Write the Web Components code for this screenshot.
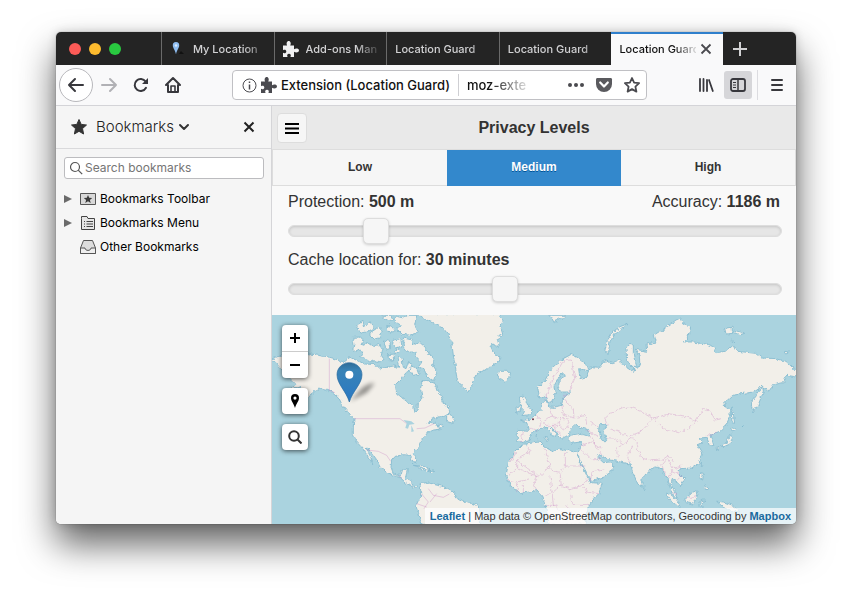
<!DOCTYPE html>
<html lang="en">
<head>
<meta charset="utf-8">
<title>Location Guard</title>
<style>
  html, body { margin: 0; }
  body {
    box-sizing: border-box; min-height: 100vh; padding: 32px 56px 80px;
    display: flex; background: #fff; overflow: hidden;
    font: 12px/16px Inter, "Noto Sans", sans-serif; color: #1a1a1a;
  }
</style>
</head>
<body>
<browser-window>
  <tab-strip slot="tabs">
    <browser-tab>
      <svg slot="icon" width="16" height="16" viewBox="0 0 16 16" aria-hidden="true"><path d="M9 13h5l-3-3z" fill="#111"/><path d="M6 1a3.400 3.400 0 0 0-3.200 3.600C2.800 7 5.200 9 6 13.500 6.800 9 9.200 7 9.200 4.600A3.400 3.400 0 0 0 6 1z" fill="#8fbdf0"/><circle cx="6" cy="4.500" r="1.200" fill="#dcecff"/></svg>
      My Location
    </browser-tab>
    <browser-tab>
      <svg slot="icon" width="16" height="16" viewBox="0 0 16 16" fill="#f0f0f1" aria-hidden="true"><path d="M0 4.500h4.200C3 2.500 3.800 0 5.700 0s2.700 2.500 1.500 4.500H11v3.700c1.800-1.200 5-.8 5 1.300s-3.200 2.500-5 1.300V16H7.400c1-1.700.2-3.300-1.400-3.300S3.600 14.300 4.600 16H0v-4.200c1.600.9 3.300.2 3.300-1.400S1.600 8.200 0 9.200z"/></svg>
      Add-ons Man
    </browser-tab>
    <browser-tab>Location Guard</browser-tab>
    <browser-tab>Location Guard</browser-tab>
    <browser-tab active>Location Guard</browser-tab>
  </tab-strip>
  <nav-toolbar slot="toolbar"></nav-toolbar>
  <bookmarks-sidebar slot="sidebar">
    <bookmark-row folder>
      <svg slot="icon" width="16" height="16" viewBox="0 0 16 16" aria-hidden="true"><path d="M.5 2.500h15v11H.5z" fill="#d8d8d8" stroke="#555"/><path d="m8 4 1.200 2.800 3 .2-2.300 2 .8 3L8 10.300 5.300 12l.8-3-2.300-2 3-.2z" fill="#3a3a3a"/></svg>
      Bookmarks Toolbar
    </bookmark-row>
    <bookmark-row folder>
      <svg slot="icon" width="16" height="16" viewBox="0 0 16 16" aria-hidden="true"><path d="M1.500 3.500v11h13v-11H8l-1-2H1.500z" fill="#e6e6e6" stroke="#444"/><path d="M4 6.500h1m1.500 0H13M4 9h1m1.500 0H13M4 11.500h1m1.500 0H13" stroke="#444"/></svg>
      Bookmarks Menu
    </bookmark-row>
    <bookmark-row>
      <svg slot="icon" width="16" height="16" viewBox="0 0 16 16" fill="#ddd" stroke="#555" aria-hidden="true"><path d="M3.500 1.500h9l3 7.500v5.500H.5V9z"/><path d="M.5 9H5c0 3.200 6 3.200 6 0h4.500v5.500H.5z" fill="#eee"/></svg>
      Other Bookmarks
    </bookmark-row>
  </bookmarks-sidebar>
  <privacy-page>
    <level-tabs slot="levels"></level-tabs>
    <level-slider slot="settings" value="158" note="Accuracy:" note-value="1186 m">Protection: <b>500 m</b></level-slider>
    <level-slider slot="settings" value="436">Cache location for: <b>30 minutes</b></level-slider>
    <map-view slot="map"></map-view>
  </privacy-page>
</browser-window>

<script>
const base = `
  :host, *, *::before, *::after { box-sizing: border-box; }
  button { font: inherit; color: inherit; border: 0; padding: 0; margin: 0; background: none; display: flex; align-items: center; justify-content: center; }
  svg { display: block; flex: none; }
`;
function define(name, css, html) {
  customElements.define(name, class extends HTMLElement {
    constructor() {
      super();
      const body = typeof html === 'function' ? html(this) : html;
      this.attachShadow({ mode: 'open' }).innerHTML = `<style>${base}${css}</style>${body}`;
    }
  });
}

define('browser-window', `
  :host { flex: 1; display: flex; flex-direction: column; min-width: 0; border-radius: 5px;
    box-shadow: 0 0 1px rgba(0,0,0,.6), 0 0 10px rgba(0,0,0,.16), 0 20px 36px rgba(0,0,0,.62); }
  .frame { flex: 1; display: flex; flex-direction: column; border-radius: 5px; overflow: hidden; background: #f5f5f5; }
  .body { flex: 1; display: flex; min-height: 0; }
`, `<div class="frame"><slot name="tabs"></slot><slot name="toolbar"></slot>
  <div class="body"><slot name="sidebar"></slot><slot></slot></div></div>`);

define('tab-strip', `
  :host { display: flex; height: 33px; background: #242424; color: #d2d2d4; }
  .lights { width: 105px; display: flex; gap: 8px; align-items: center; padding-left: 13px; }
  .lights button { width: 12px; height: 12px; border-radius: 50%; }
  .tabs { flex: 1; display: flex; min-width: 0; }
  .new { width: 73px; justify-content: flex-start; padding-left: 9px; }
`, `<div class="lights">
    <button aria-label="Close window" style="background:#fc5b57"></button>
    <button aria-label="Minimize window" style="background:#fdbb2e"></button>
    <button aria-label="Zoom window" style="background:#29c940"></button>
  </div>
  <div class="tabs" role="tablist"><slot></slot></div>
  <button class="new" aria-label="New tab"><svg width="16" height="16" viewBox="0 0 16 16" stroke="#d2d2d4" stroke-width="2"><path d="M8 1v14M1 8h14"/></svg></button>`);

define('browser-tab', `
  :host { flex: 1 1 0; min-width: 0; display: flex; border-left: 1px solid #6a6a6a; }
  :host([active]) { background: #f9f9fa; color: #111; border-left: 0; border-top: 2px solid #2f7fcc; padding-bottom: 2px; }
  .tab { flex: 1; min-width: 0; justify-content: flex-start; padding: 0 8px; gap: 7px; font-size: 11px; font-weight: 500; }
  .label { flex: 1; text-align: left; white-space: nowrap; overflow: hidden;
    -webkit-mask-image: linear-gradient(90deg, #000 calc(100% - 22px), transparent calc(100% + 4px)); }
  :host([active]) .tab { padding-right: 0; }
  .close { width: 20px; margin-right: 7px; }
`, el => `<button class="tab" role="tab" aria-selected="${el.hasAttribute('active')}"><slot name="icon"></slot><span class="label"><slot></slot></span></button>
  ${el.hasAttribute('active') ? '<button class="close" aria-label="Close tab"><svg width="12" height="12" viewBox="0 0 12 12" stroke="#4a4a4f" stroke-width="1.800"><path d="m1.500 1.500 9 9m0-9-9 9"/></svg></button>' : ''}`);

define('nav-toolbar', `
  :host { display: flex; align-items: center; height: 41px; padding: 0 3px; background: #f9f9fa; border-bottom: 1px solid #d4d4d8; color: #38383d; }
  .tool { width: 32px; height: 28px; }
  .back { width: 34px; height: 34px; border: 1px solid #b8b8bc; border-radius: 50%; background: #fff; }
  .url { flex: 1; min-width: 0; height: 30px; margin: 0 43px; display: flex; align-items: center; gap: 4px; padding: 0 5px 0 9px;
    border: 1px solid #c0c0c4; border-radius: 4px; background: #fff; }
  .identity { gap: 4px; font-size: 13px; font-weight: 500; color: #111; white-space: nowrap; }
  .url i { width: 1px; height: 22px; background: #cfcfd3; margin: 0 4px; }
  input { flex: 1; min-width: 0; width: 40px; border: 0; padding: 0; background: none; outline: 0; font: inherit; font-size: 13px; font-weight: 500; color: #111;
    -webkit-mask-image: linear-gradient(90deg, #000 22px, transparent 66px); }
  .actions { display: flex; gap: 10px; }
  .on { width: 28px; border-radius: 3px; background: #d6d6d9; margin: 0 5px 0 2px; }
  .sep { width: 1px; height: 30px; background: #dcdce0; margin-right: 3px; }
`, `<button class="back" aria-label="Back"><svg width="18" height="16" viewBox="0 0 18 16" fill="none" stroke="currentColor" stroke-width="2" stroke-linecap="round" stroke-linejoin="round"><path d="M16 8H2m6-6L2 8l6 6"/></svg></button>
  <button class="tool" aria-label="Forward"><svg width="18" height="16" viewBox="0 0 18 16" fill="none" stroke="#b1b1b5" stroke-width="2" stroke-linecap="round" stroke-linejoin="round"><path d="M2 8h14m-6-6 6 6-6 6"/></svg></button>
  <button class="tool" aria-label="Reload"><svg width="16" height="16" viewBox="0 0 16 16" fill="none" stroke="currentColor" stroke-width="2" stroke-linecap="round"><path d="M13 10.800A6 6 0 1 1 12.600 4.500"/><path d="M15 1v6H9z" fill="currentColor" stroke="none"/></svg></button>
  <button class="tool" aria-label="Home"><svg width="18" height="18" viewBox="0 0 18 18" fill="none" stroke="currentColor" stroke-width="2" stroke-linecap="round" stroke-linejoin="round"><path d="m2 9 7-7 7 7M4 9v7h10V9"/><path d="M7 15v-5h4v5" stroke-width="1.600"/></svg></button>
  <div class="url">
    <button class="identity"><svg width="15" height="15" viewBox="0 0 15 15" fill="none" stroke="#4a4a4f"><circle cx="7.500" cy="7.500" r="6.500"/><path d="M7.500 6.500v5M7.500 3.500v1.500" stroke-width="1.500"/></svg>
      <svg width="16" height="16" viewBox="0 0 16 16" fill="#4a4a4f"><path d="M0 4.500h4.200C3 2.500 3.800 0 5.700 0s2.700 2.500 1.500 4.500H11v3.700c1.800-1.200 5-.8 5 1.300s-3.200 2.500-5 1.300V16H7.400c1-1.700.2-3.300-1.400-3.300S3.600 14.300 4.600 16H0v-4.200c1.600.9 3.300.2 3.300-1.400S1.600 8.200 0 9.200z"/></svg>
      <span>Extension (Location Guard)</span></button>
    <i></i>
    <input aria-label="Address" value="moz-exte">
    <div class="actions">
      <button aria-label="Page actions"><svg width="18" height="16" viewBox="0 0 18 16" fill="#4a4a4f"><circle cx="3" cy="8" r="2"/><circle cx="9" cy="8" r="2"/><circle cx="15" cy="8" r="2"/></svg></button>
      <button aria-label="Save to Pocket"><svg width="18" height="16" viewBox="0 0 18 16"><path d="M2.500 1h13C16.500 1 17 1.600 17 2.500V7a8 8 0 0 1-16 0V2.500C1 1.600 1.500 1 2.500 1z" fill="#5a5a5e"/><path d="m5.200 5.500 3.800 4 3.800-4" fill="none" stroke="#fff" stroke-width="2.200" stroke-linecap="round" stroke-linejoin="round"/></svg></button>
      <button aria-label="Bookmark this page"><svg width="18" height="18" viewBox="0 0 18 18" fill="none" stroke="#4a4a4f" stroke-width="1.800" stroke-linejoin="round"><path d="m9 2 2.100 4.600 5 .6-3.700 3.400 1 5L9 13.100l-4.400 2.500 1-5L1.900 7.200l5-.6z"/></svg></button>
    </div>
  </div>
  <button class="tool" aria-label="Library"><svg width="16" height="16" viewBox="0 0 16 16" stroke="currentColor" stroke-width="1.800" stroke-linecap="round"><path d="M2 2v12M5.500 2v12M9 3v11M11 3l3.800 11"/></svg></button>
  <button class="tool on" aria-label="Sidebars" aria-pressed="true"><svg width="16" height="14" viewBox="0 0 16 14" fill="none" stroke="currentColor" stroke-width="1.800"><rect x="1" y="1" width="14" height="12" rx="2"/><path d="M8 1v12" stroke-width="1.500"/><path d="M3 4.500h3M3 7h3M3 9.500h3" stroke-width="1"/></svg></button>
  <span class="sep"></span>
  <button class="tool" aria-label="Open menu"><svg width="14" height="14" viewBox="0 0 14 14" stroke="currentColor" stroke-width="2" stroke-linecap="round"><path d="M2 2h10M2 7h10M2 12h10"/></svg></button>`);

define('bookmarks-sidebar', `
  :host { display: block; width: 216px; flex: none; background: #f5f5f5; border-right: 1px solid #d5d5d8; }
  header { display: flex; align-items: center; height: 43px; padding: 0 14px; border-bottom: 1px solid #d9d9db; }
  .title { gap: 8px; font-size: 15px; font-weight: 300; color: #222; }
  .title svg:last-child { margin-left: -4px; }
  .x { margin-left: auto; width: 16px; height: 20px; }
  .search { display: flex; align-items: center; gap: 2px; height: 22px; margin: 8px 7px 8px 8px; padding: 0 4px; border: 1px solid #bcbcbf; border-radius: 3px; background: #fff; }
  input { flex: 1; min-width: 0; border: 0; padding: 0; outline: 0; font: inherit; background: none; }
  input::placeholder { color: #757575; opacity: 1; }
`, `<header><button class="title"><svg width="18" height="18" viewBox="0 0 18 18" fill="#333" stroke="#333" stroke-linejoin="round"><path d="m9 1.500 2.200 4.900 5.300.6-4 3.600 1.100 5.400L9 13.300 4.400 16l1.100-5.400-4-3.600 5.300-.6z"/></svg>Bookmarks
    <svg width="12" height="12" viewBox="0 0 12 12" fill="none" stroke="#333" stroke-width="2" stroke-linecap="round" stroke-linejoin="round"><path d="m2 4 4 4 4-4"/></svg></button>
    <button class="x" aria-label="Close sidebar"><svg width="12" height="12" viewBox="0 0 12 12" stroke="#222" stroke-width="2"><path d="m1.500 1.500 9 9m0-9-9 9"/></svg></button></header>
  <div class="search"><svg width="14" height="14" viewBox="0 0 14 14" fill="none" stroke="#555" stroke-width="1.200"><circle cx="6" cy="6" r="4.500"/><path d="m9.200 9.200 4 4"/></svg><input type="text" aria-label="Search bookmarks" placeholder="Search bookmarks"></div>
  <div role="tree"><slot></slot></div>`);

define('bookmark-row', `
  :host { display: flex; align-items: center; height: 24px; padding-left: 8px; gap: 4px; color: #000; }
  .twisty { width: 8px; margin-right: 4px; }
`, el => `<span class="twisty">${el.hasAttribute('folder') ? '<svg width="8" height="10" viewBox="0 0 8 10" fill="#6a6a6a"><path d="m0 1 8 4-8 4z"/></svg>' : ''}</span>
  <slot name="icon"></slot><span role="treeitem"><slot></slot></span>`);

define('privacy-page', `
  :host { flex: 1; min-width: 0; display: flex; flex-direction: column; background: #f9f9f9; color: #333; font-family: "Liberation Sans", Arial, sans-serif; }
  .bar { display: grid; grid-template-columns: 30px 1fr 30px; align-items: center; height: 44px; padding: 0 5px; background: #e9e9e9; border-bottom: 1px solid #ddd; }
  .menu { width: 30px; height: 30px; border: 1px solid #ddd; border-radius: 4px; background: #f6f6f6; }
  h1 { margin: 0; text-align: center; font-size: 16px; line-height: 20px; }
  .settings { padding: 0 14px 13px 16px; }
`, `<div class="bar"><button class="menu" aria-label="Menu"><svg width="14" height="12" viewBox="0 0 14 12" stroke="#000" stroke-width="2"><path d="M0 2h14M0 6.500h14M0 11h14"/></svg></button><h1>Privacy Levels</h1></div>
  <slot name="levels"></slot><div class="settings"><slot name="settings"></slot></div><slot name="map"></slot>`);

define('level-tabs', `
  :host { display: flex; height: 36px; background: #f6f6f6; border: 1px solid #ddd; border-width: 0 1px 1px; }
  button { flex: 1; font-size: 12px; font-weight: 700; padding-bottom: 2px; }
  button[aria-pressed=true] { background: #3388cc; color: #fff; margin-bottom: -1px; text-shadow: 0 1px 0 #005599; padding-bottom: 3px; }
`, `<button aria-pressed="false">Low</button><button aria-pressed="true">Medium</button><button aria-pressed="false">High</button>`);

define('level-slider', `
  :host { display: block; font-size: 16px; }
  .row { display: flex; justify-content: space-between; line-height: 32px; padding-right: 2px; }
  input { appearance: none; -webkit-appearance: none; display: block; width: 100%; height: 26px; margin: 0; background: none; }
  input::-webkit-slider-runnable-track { height: 12px; border: 1px solid #ddd; border-radius: 6px; background: #e6e6e6; box-shadow: inset 0 1px 3px rgba(0,0,0,.15); }
  input::-webkit-slider-thumb { -webkit-appearance: none; width: 26px; height: 26px; margin-top: -8px; border: 1px solid #ddd; border-radius: 5px; background: #f6f6f6; box-shadow: 0 1px 3px rgba(0,0,0,.18); }
`, el => `<div class="row"><label for="range"><slot></slot></label>${el.hasAttribute('note') ? `<span>${el.getAttribute('note')} <b>${el.getAttribute('note-value')}</b></span>` : ''}</div>
  <input id="range" type="range" min="0" max="1000" value="${el.getAttribute('value')}">`);

define('map-view', `
  :host { flex: 1; display: flex; position: relative; min-height: 120px; background: #aad3df; overflow: hidden; }
  .map { position: absolute; inset: 0; width: 100%; height: 100%; }
  .controls { position: relative; display: flex; flex-direction: column; gap: 10px; padding: 10px; }
  .group { width: 26px; border-radius: 4px; background: #fff; box-shadow: 0 1px 5px rgba(0,0,0,.65); color: #000; }
  .group button { width: 26px; height: 26px; font-weight: 700; }
  .group button + button { border-top: 1px solid #ccc; height: 27px; }
  .credit { position: absolute; right: 0; bottom: 0; padding: 0 5px; background: rgba(255,255,255,.7); font-size: 11px; line-height: 16px; white-space: nowrap; }
  a { color: #1a6a9e; font-weight: 700; text-decoration: none; }
`, `<svg class="map" viewBox="6 9 1572 627" preserveAspectRatio="xMinYMin slice" role="img" aria-label="World map">
  <defs>
    <filter id="coast" x="-2%" y="-2%" width="104%" height="104%"><feTurbulence type="fractalNoise" baseFrequency=".08" numOctaves="3" seed="4"/><feDisplacementMap in="SourceGraphic" scale="14" xChannelSelector="R" yChannelSelector="G"/></filter>
    <linearGradient id="pin" x1="0" x2="0" y1="0" y2="1"><stop stop-color="#2e6c97"/><stop offset=".2" stop-color="#3883b7"/><stop offset="1" stop-color="#2a78c4"/></linearGradient>
    <filter id="soft" x="-50%" y="-50%" width="200%" height="200%"><feGaussianBlur stdDeviation="6"/></filter>
  </defs>
  <g filter="url(#coast)" fill="#f2efe9" stroke="#82b9cf" stroke-width="2.500" stroke-linejoin="round">
    <path d="M0 143 16 150 30 168 34 176 50 190 76 215 60 232 90 225 100 240 85 268 115 258 132 237 150 228 170 232 188 240 205 255 215 275 228 293 240 310 252 322 250 345 250 368 262 392 280 412 298 440 308 455 302 435 288 408 300 415 320 443 330 465 345 478 370 490 392 498 405 510 422 522 438 528 440 522 426 518 425 505 406 500 409 486 412 470 398 472 394 486 382 491 370 484 363 466 365 445 376 433 400 428 420 430 430 450 438 452 436 436 430 424 445 405 452 388 464 374 474 360 488 354 505 352 514 343 498 338 486 328 474 335 484 322 505 315 535 311 541 292 520 272 512 248 502 236 494 214 474 206 456 206 452 228 456 258 442 275 441 300 432 300 428 282 402 262 380 244 376 218 398 196 408 182 430 168 416 148 408 170 400 166 396 140 388 130 382 142 386 166 370 162 330 170 318 158 285 156 262 146 240 136 220 152 200 142 180 136 150 131 115 125 80 118 45 125Z"/>
    <path d="M248 76 272 75 282 88 276 98 292 92 310 104 326 98 338 112 334 130 342 142 330 150 314 146 302 152 286 140 270 132 282 122 262 114 248 118 252 98ZM260 45 278 24 284 46 300 28 310 50 290 60 270 64ZM300 62 326 44 340 56 326 66 332 76 310 82 300 72ZM334 10 366 10 372 22 356 26 340 18ZM350 40 364 42 376 58 354 62ZM376 12 400 18 414 10 440 10 434 40 446 62 420 70 396 66 380 50 394 40 376 30ZM340 84 360 88 362 110 348 114ZM370 84 392 80 396 104 378 112 368 98ZM352 128 372 126 374 146 358 146ZM400 78 426 84 432 98 450 92 466 106 470 120 486 130 494 154 486 160 500 182 490 206 470 192 462 170 444 166 456 150 440 136 434 118 416 122 404 106ZM424 162 444 170 450 186 430 190 420 178ZM380 108 390 118 374 126Z"/>
    <path d="M440 5 460 20 500 36 516 44 532 64 545 90 550 130 556 160 560 196 574 222 592 237 602 232 608 210 622 184 650 172 682 154 690 134 668 122 662 96 688 104 682 82 698 66 690 40 700 28 688 5Z"/>
    <path d="M530 312 540 306 556 328 548 334 530 328ZM506 336 514 338 520 344 508 350ZM430 460 456 462 480 474 470 478 450 466ZM476 474 494 478 480 482Z"/>
    <path d="M450 515 470 512 494 518 514 522 540 532 556 546 562 560 594 570 628 582 632 640 456 640 446 604 438 580 452 552 452 535Z"/>
    <path d="M682 186 690 178 716 178 722 192 704 207 686 200ZM748 256 760 252 766 262 774 282 786 298 780 308 756 311 764 298 754 286ZM738 286 752 280 754 296 740 304Z"/>
    <path d="M742 355 770 358 780 345 765 333 752 326 780 322 800 305 814 292 818 272 828 264 836 285 852 286 874 280 878 262 890 250 902 240 872 240 865 224 868 204 886 190 876 182 862 204 852 222 856 246 846 270 834 272 824 250 808 258 803 225 824 206 846 168 872 144 902 128 920 135 948 158 954 176 926 170 930 200 950 194 962 164 988 166 1004 146 1024 152 1046 145 1066 162 1082 176 1096 172 1070 145 1068 110 1078 98 1090 98 1090 125 1096 165 1110 165 1108 132 1096 112 1130 118 1128 96 1156 90 1150 70 1186 48 1218 24 1232 18 1240 38 1262 45 1258 70 1240 90 1272 90 1308 96 1330 104 1338 122 1366 118 1386 100 1404 118 1456 124 1474 138 1520 140 1548 148 1580 178 1580 195 1552 190 1540 212 1510 218 1498 236 1472 226 1452 240 1422 244 1388 250 1362 274 1364 286 1380 294 1380 312 1368 340 1348 360 1322 366 1332 400 1320 402 1310 376 1286 378 1298 394 1282 396 1298 422 1290 450 1262 468 1234 470 1222 478 1244 500 1232 522 1216 505 1206 500 1204 520 1216 545 1224 558 1208 548 1198 520 1194 498 1184 494 1176 470 1156 464 1134 478 1116 500 1116 524 1106 522 1088 480 1080 456 1060 452 1034 446 1010 442 988 428 984 436 1000 452 1018 450 1032 462 1020 482 1000 495 965 506 950 482 930 446 922 425 936 400 930 390 904 394 896 384 900 370 934 364 960 372 952 352 930 346 914 338 902 350 898 368 886 374 872 382 860 360 842 346 860 368 855 378 830 346 810 350 786 360 780 385 756 392 742 385Z"/>
    <path d="M758 397 810 390 824 404 850 420 866 412 920 420 930 450 950 490 960 512 997 514 986 545 955 580 945 640 838 640 826 580 815 552 800 536 750 545 720 520 708 492 715 455 735 420Z"/>
    <path d="M990 335 1008 340 1002 355 1010 386 994 386 986 350Z" fill="#aad3df"/>
    <path d="M1004 122 1012 85 1030 58 1050 44 1072 36 1054 52 1036 66 1020 88 1016 112 1018 124ZM1448 262 1478 222 1480 240 1464 280 1450 302 1444 280ZM1386 284 1390 304 1394 334 1386 332 1384 304ZM1382 346 1398 352 1386 360ZM1382 364 1388 380 1380 396 1362 404 1350 402 1370 390ZM1338 404 1346 406 1340 416ZM1294 454 1298 460 1294 468ZM1292 482 1300 484 1298 504 1290 500ZM1304 520 1316 530 1306 534ZM1122 524 1128 530 1124 536ZM1188 540 1208 552 1232 582 1222 582 1200 564ZM1244 560 1260 548 1280 534 1284 550 1270 576 1248 572ZM1290 566 1304 564 1296 576 1300 586 1290 584ZM1340 568 1362 570 1388 580 1410 600 1380 596 1360 586ZM1364 48 1386 46 1388 64 1368 66ZM1394 54 1424 64 1410 68 1396 64ZM1384 84 1392 88 1384 92ZM1544 118 1558 120 1550 126ZM836 10 886 10 880 22 864 18 854 34 846 20ZM820 375 835 380 832 387ZM798 366 802 372 800 382ZM1420 344 1416 348Z"/>
  </g>
  <g fill="none" stroke="#c57fc0" stroke-opacity=".5" stroke-width="2" stroke-linejoin="round">
    <path d="M178 140V235L195 242M252 320H390L410 335M440 350 465 348 492 335M290 414 325 418 350 430 362 448M386 490 396 500M455 546 475 570 462 590M475 530 490 550 520 556 538 546M440 575 470 585M480 570 500 545"/>
    <g filter="url(#coast)">
    <path d="M824 264 850 200 880 146 904 144 914 200 896 240M760 360 752 390M782 348 800 356M800 310 814 330 806 350M840 288 844 312 820 330 832 340 866 340 870 320 844 312M876 282 880 310 912 318 946 310 950 338M866 340 880 354 900 340M888 270 880 250 890 250M888 270 910 290 912 318M850 340 858 356 876 366M896 340 890 320 870 320M960 332 984 344M950 355 984 372"/>
    <path d="M740 420 720 450M770 400 780 420 740 444V470L715 490M740 470 806 494 840 462 824 410M740 444 800 490M886 420V462H946M840 462 850 480 870 484 886 462M800 490 790 520 800 536M740 545 744 510 780 500M840 490 846 540 826 552M846 540 870 520 900 530 940 520 950 500M900 530 906 580H955M846 540 850 580 890 610M870 484 874 520M716 505 740 510M760 515V545M940 520 950 540 986 545M890 580 906 610 930 605M826 580H860"/>
    <path d="M1012 340 1004 320 1022 304 1050 290 1078 284 1120 300 1150 318 1128 340 1110 360 1080 372 1050 362 1020 350M1150 318 1180 350 1226 362 1256 350 1278 326 1244 312 1200 306 1150 318M1278 326 1300 290 1322 300 1336 324 1356 320M1340 360 1310 372M1010 380 1040 382 1060 396 1040 410 1042 436M1060 396 1086 376 1106 396 1098 410 1120 440 1150 446 1176 444 1196 430 1210 450M1078 452 1072 430 1086 400M1188 494 1176 460 1192 440 1210 470 1234 462M1196 500 1206 476 1234 490 1222 505M960 372 976 400 996 430M936 400 966 390 996 410M960 510 966 480 1004 470M930 410 960 440 990 440M1206 540 1218 545M1250 560 1280 550"/>
    </g>
  </g>
  <path d="M400 324 424 328 434 336 418 338 414 350 406 348 410 334ZM424 340 432 358 424 360Z" fill="#aad3df"/>
  <circle cx="789" cy="322" r="3" fill="#70354c"/>
  <path d="m240 268 36-40q20-15 38-14l-24 28z" fill="#000" opacity=".4" filter="url(#soft)"/>
  <path d="M238 152c-21 0-37 16-37 36 0 28 28 50 37 82 9-32 38-54 38-82 0-20-17-36-38-36z" fill="url(#pin)" stroke="#2a6b9f" stroke-width="2"/><circle cx="238" cy="188" r="12" fill="#fff"/>
</svg>
<div class="controls">
  <div class="group"><button aria-label="Zoom in"><svg width="12" height="12" viewBox="0 0 12 12" stroke="#000" stroke-width="2"><path d="M6 1v10M1 6h10"/></svg></button><button aria-label="Zoom out"><svg width="10" height="4" viewBox="0 0 10 4"><path d="M0 1h10v2H0z"/></svg></button></div>
  <div class="group"><button aria-label="Current location"><svg width="10" height="14" viewBox="0 0 10 14"><path fill-rule="evenodd" d="M5 0a4 4 0 0 0-4 4c0 3 2.500 5 4 10 1.500-5 4-7 4-10a4 4 0 0 0-4-4zm0 2.500a1.600 1.600 0 1 1 0 3.200 1.600 1.600 0 0 1 0-3.200z"/></svg></button></div>
  <div class="group"><button aria-label="Search the map"><svg width="14" height="14" viewBox="0 0 14 14" fill="none" stroke="#333" stroke-width="2"><circle cx="6" cy="6" r="4.800"/><path d="m9.500 9.500 4 4"/></svg></button></div>
</div>
<div class="credit"><a href="#">Leaflet</a> | Map data © OpenStreetMap contributors, Geocoding by <a href="#">Mapbox</a></div>`);

// The page element stretches over what the sidebar leaves free.
</script>
</body>
</html>
